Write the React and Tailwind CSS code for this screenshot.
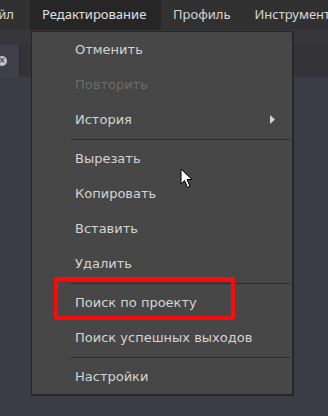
import { useState } from "react";

const items = [
    { label: "Отменить" },
    { label: "Повторить", disabled: true },
    { label: "История", submenu: true },
    { sep: true },
    { label: "Вырезать" },
    { label: "Копировать" },
    { label: "Вставить" },
    { label: "Удалить" },
    { sep: true },
    { label: "Поиск по проекту", highlight: true },
    { label: "Поиск успешных выходов" },
    { sep: true },
    { label: "Настройки" },
];

function MenuItem({ item }) {
    if (item.sep) {
        return (
            <div className="h-[4px] flex items-center pl-[39px] pr-[2px]">
                <div className="h-px w-full bg-[#2b2b2b]" />
            </div>
        );
    }
    return (
        <div className="relative h-[35px] flex items-center pl-[43px] pr-4">
            <span className={item.disabled ? "text-[#6b6b6b]" : "text-[#d4d4d4]"}>{item.label}</span>
            {item.submenu && (
                <svg className="ml-auto mr-[1px]" width="5" height="9" viewBox="0 0 5 9">
                    <path d="M0 0 L5 4.5 L0 9 Z" fill="#d0d0d0" />
                </svg>
            )}
            {item.highlight && (
                <div className="absolute left-[22px] top-[-8px] w-[181px] h-[43px] border-[4px] border-[#ff0a0a] rounded-[3px]" />
            )}
        </div>
    );
}

function App() {
    const [menu] = useState(items);

    return (
        <div
            className="relative w-[328px] h-[416px] overflow-hidden bg-[#3c3c46] text-[13px]"
            style={{ fontFamily: '"DejaVu Sans", "Noto Sans", sans-serif' }}
        >
            <div
                className="h-[30px] bg-[#313131] flex items-stretch text-[#d6d6d6] whitespace-nowrap"
                style={{ fontFamily: '"Noto Sans", "DejaVu Sans", sans-serif' }}
            >
                <div className="w-[50px] ml-[-20px] pr-[16px] flex items-center justify-end shrink-0">Файл</div>
                <div className="bg-[#262626] w-[131px] px-3 flex items-center text-[#e0e0e0] shrink-0">Редактирование</div>
                <div className="px-3 flex items-center">Профиль</div>
                <div className="px-3 flex items-center">Инструменты</div>
            </div>
            <div className="h-[15px] bg-[#37373b]" />
            <div className="h-[32px] flex bg-[#343438]">
                <div className="w-[20px] bg-[#3f3f49] border-r border-[#2c2c30] flex items-center">
                    <div className="ml-[-3px] w-[10px] h-[10px] rounded-full bg-[#c4c4c8] flex items-center justify-center text-[#3f3f49] text-[8px] leading-none font-bold">
                        ×
                    </div>
                </div>
            </div>

            <div className="absolute left-[31px] top-[31px] w-[263px] bg-[#474747] border border-[#262626] border-r-2 border-b-2">
                {menu.map((item, i) => (
                    <MenuItem key={i} item={item} />
                ))}
            </div>

            <svg className="absolute left-[180px] top-[168px]" width="14" height="22" viewBox="0 0 14 22">
                <path d="M1 1 L1 16 L4.5 12.5 L7.5 19.5 L10 18.5 L7 11.5 L12 11.5 Z" fill="#ffffff" stroke="#000000" strokeWidth="1" strokeLinejoin="round" />
            </svg>
        </div>
    );
}

export default App;
